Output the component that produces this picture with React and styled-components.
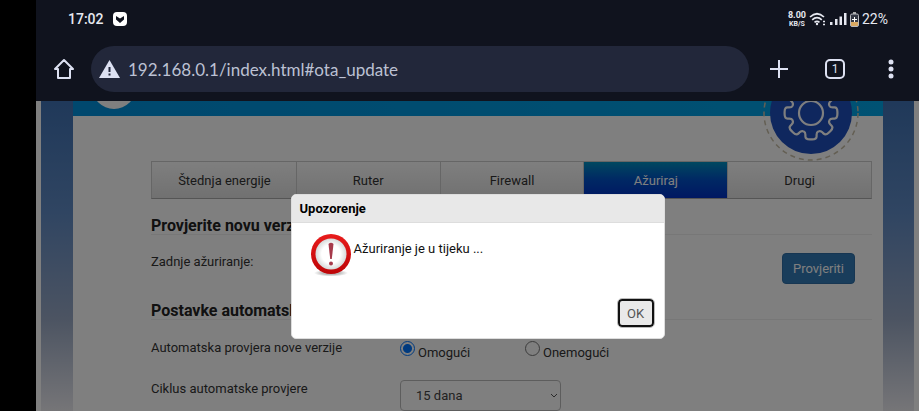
import React, { useState } from 'react';
import styled, { createGlobalStyle } from 'styled-components';

const GlobalStyle = createGlobalStyle`
  * {
    box-sizing: border-box;
  }

  body {
    margin: 0;
    background: #000;
    font-family: Roboto, 'Liberation Sans', sans-serif;
    font-size: 13px;
    color: #333;
  }

  button,
  input,
  select {
    font-family: inherit;
    font-size: inherit;
    margin: 0;
  }
`;

const Device = styled.div`
  display: flex;
  flex-direction: column;
  height: 100vh;
  margin-left: 36px;
  background: #10131e;
  overflow: hidden;
`;

const StatusBar = styled.div`
  display: flex;
  flex: none;
  align-items: center;
  justify-content: space-between;
  height: 38px;
  padding: 0 31px 0 32px;
  color: #e6e8f0;
`;

const StatusGroup = styled.div`
  display: flex;
  align-items: center;
  gap: ${(props) => props.$gap}px;

  svg {
    display: block;
  }
`;

const Clock = styled.span`
  font-size: 14px;
  font-weight: 500;
`;

const Speed = styled.span`
  display: flex;
  flex-direction: column;
  align-items: center;
  font-size: 9px;
  line-height: 10px;
  font-weight: 700;

  small {
    font-size: 7px;
    line-height: 8px;
  }
`;

const Battery = styled.span`
  font-size: 14px;
`;

const Toolbar = styled.div`
  display: flex;
  flex: none;
  align-items: center;
  height: 63px;
  padding: 0 16px 1px;
`;

const IconButton = styled.button`
  display: flex;
  align-items: center;
  justify-content: center;
  width: 24px;
  height: 24px;
  padding: 0;
  border: 0;
  background: none;
  color: #dde1f2;
`;

const AddressBar = styled.label`
  display: flex;
  flex: 1;
  align-items: center;
  gap: 8px;
  height: 46px;
  margin: 0 18px 0 15px;
  padding: 0 8px;
  border-radius: 23px;
  background: #22273a;
`;

const Address = styled.input`
  flex: 1;
  min-width: 0;
  height: 30px;
  padding: 0;
  border: 0;
  outline: 0;
  background: none;
  color: #bcc1d3;

  && {
    font-family: Lato, sans-serif;
    font-size: 17px;
  }
`;

const Actions = styled.div`
  display: flex;
  gap: 32px;
`;

const TabCount = styled.span`
  display: flex;
  align-items: center;
  justify-content: center;
  width: 20px;
  height: 20px;
  border: 2px solid;
  border-radius: 5px;
  font-size: 12px;
`;

const Viewport = styled.div`
  position: relative;
  flex: 1;
  min-height: 0;
  padding: 0 5px;
  background: #fff;
  overflow: hidden;
`;

const Backdrop = styled.div`
  height: 100%;
  padding: 0 31px 0 32px;
  background: linear-gradient(#4072b4, #5f8ac4 35%, #98a8c4 70%, #ecebf0);
`;

const Sheet = styled.main`
  position: relative;
  height: 100%;
  background: #fff;
`;

const Header = styled.header`
  position: relative;
  height: 15px;
  background: linear-gradient(90deg, #0090dc, #00a4e6);
  overflow: hidden;
`;

const Logo = styled.div`
  position: absolute;
  left: 19px;
  bottom: 7px;
  width: 44px;
  height: 44px;
  border-radius: 50%;
  background: #fff;
`;

const SettingsBadge = styled.svg`
  position: absolute;
  top: -36px;
  right: 24px;
`;

const Content = styled.div`
  padding: 45px 11px 0 78px;
`;

const Tabs = styled.nav`
  display: grid;
  grid-template-columns: repeat(5, 1fr);
  height: 38px;
  border: 1px solid #ccc;
  border-bottom-color: #aaa;
`;

const Tab = styled.button`
  border: 0;
  border-left: 1px solid ${(props) => (props.$first ? 'transparent' : '#ccc')};
  background: ${(props) =>
    props.$active
      ? 'linear-gradient(#0090c0, #0050c8 50%, #0030c4)'
      : 'linear-gradient(#fefefe, #e2e2e2)'};
  color: ${(props) => (props.$active ? '#fff' : '#333')};
`;

const SectionTitle = styled.h2`
  height: 36px;
  margin: 0;
  border-bottom: 1px solid #eee;
  font-size: 16px;
  line-height: 18px;
  padding-top: 18px;
  color: #222;
`;

const Row = styled.div`
  display: grid;
  grid-template-columns: 249px 1fr;
  height: ${(props) => props.$height}px;
  padding-top: ${(props) => props.$top}px;
  align-items: start;
  line-height: 18px;
`;

const CheckButton = styled.button`
  justify-self: end;
  width: 73px;
  height: 31px;
  margin-right: 17px;
  padding: 0;
  border: 1px solid #2e6da4;
  border-radius: 4px;
  background: #337ab7;
  color: #fff;
`;

const Radios = styled.div`
  display: flex;
`;

const RadioLabel = styled.label`
  display: flex;
  width: 125px;
  gap: 3px;
  padding-top: 5px;
`;

const Radio = styled.input`
  appearance: none;
  width: 15px;
  height: 15px;
  margin-top: -3px !important;
  border: 1px solid #777;
  border-radius: 50%;
  background: #fff;

  &:checked {
    border-color: #0075ff;
    background: radial-gradient(circle, #0075ff 4px, #fff 5px);
  }
`;

const SelectBox = styled.div`
  display: grid;
  align-items: center;
  width: 161px;

  > * {
    grid-area: 1 / 1;
  }

  svg {
    justify-self: end;
    margin-right: 3px;
    pointer-events: none;
  }
`;

const Select = styled.select`
  appearance: none;
  height: 31px;
  padding: 0 15px;
  border: 1px solid #bbb;
  border-radius: 4px;
  background: #fff;
  color: #444;
`;

const Overlay = styled.div`
  position: absolute;
  inset: 0;
  display: flex;
  align-items: flex-start;
  justify-content: center;
  padding: 93px 0 0;
  background: rgba(0, 0, 0, 0.5);
`;

const Dialog = styled.section`
  display: flex;
  flex-direction: column;
  width: 374px;
  height: 145px;
  border: 1px solid #ddd;
  border-radius: 5px;
  background: #fff;
  color: #111;
  overflow: hidden;
`;

const DialogTitle = styled.h3`
  margin: 0;
  padding: 0 8px;
  border-bottom: 1px solid #ddd;
  background: #e8e8e8;
  font-size: 13px;
  line-height: 27px;
  color: #000;
`;

const DialogBody = styled.div`
  display: flex;
  flex: 1;
  gap: 2px;
  padding: 10px 18px 0;

  p {
    margin: 8px 0 0;
    line-height: 16px;
  }
`;

const OkButton = styled.button`
  align-self: flex-end;
  width: 36px;
  height: 28px;
  margin: 0 10px 11px !important;
  padding: 0;
  border: 2px solid #111;
  border-radius: 4px;
  outline: 1px solid #bbb;
  background: #e9e9e9;
  color: #555;
`;

const WarningIcon = () => (
  <svg width="42" height="44" viewBox="0 0 42 44">
    <defs>
      <linearGradient id="ring" x1="0" y1="0" x2="0" y2="1">
        <stop offset="0" stopColor="#e81c1c" />
        <stop offset="1" stopColor="#bd0508" />
      </linearGradient>
      <radialGradient id="face">
        <stop offset="0.6" stopColor="#fff" />
        <stop offset="1" stopColor="#d6d9d9" />
      </radialGradient>
      <radialGradient id="shade">
        <stop offset="0.5" stopColor="#bbb" />
        <stop offset="1" stopColor="#fff" />
      </radialGradient>
    </defs>
    <ellipse cx="21" cy="40" rx="17" ry="3.5" fill="url(#shade)" />
    <circle cx="21" cy="21" r="20" fill="url(#ring)" />
    <circle cx="21" cy="21" r="15.5" fill="url(#face)" />
    <path d="M18.500 11q2.500-2.500 5 0L21.800 26h-1.600z" fill="#a63a4b" />
    <circle cx="21" cy="30.500" r="2" fill="#a63a4b" />
  </svg>
);

const tabs = ['Štednja energije', 'Ruter', 'Firewall', 'Ažuriraj', 'Drugi'];

// eight-toothed outline around the centre of the badge, with softened corners
const gearPath = () => {
  const points = [];
  for (let i = 0; i < 8; i++) {
    [[-16, 20], [-12, 27], [12, 27], [16, 20]].forEach(([offset, radius]) => {
      const angle = ((i * 45 + offset) * Math.PI) / 180;
      points.push([48 + radius * Math.sin(angle), 48 - radius * Math.cos(angle)]);
    });
  }
  const between = (a, b) =>
    `${(a[0] + (b[0] - a[0]) * 0.4).toFixed(1)} ${(a[1] + (b[1] - a[1]) * 0.4).toFixed(1)}`;
  const corners = points.map((point, i) => {
    const prev = points[(i + points.length - 1) % points.length];
    const next = points[(i + 1) % points.length];
    return `${between(point, prev)}Q${point[0].toFixed(1)} ${point[1].toFixed(1)} ${between(point, next)}`;
  });
  return `M${corners.join('L')}Z`;
};

const App = () => {
  const [mode, setMode] = useState('on');
  const [open, setOpen] = useState(true);

  return (
    <>
      <GlobalStyle />
      <Device>
        <StatusBar>
          <StatusGroup $gap={9}>
            <Clock>17:02</Clock>
            <svg width="14" height="14" viewBox="0 0 14 14">
              <rect width="14" height="14" rx="4" fill="#fff" />
              <path d="M3 4 7 6.500l4-2.500v3.500L7 11 3 7.500z" fill="#10131e" />
            </svg>
          </StatusGroup>
          <StatusGroup $gap={3}>
            <Speed>
              8.00<small>KB/S</small>
            </Speed>
            <svg width="18" height="14" viewBox="0 0 18 14" fill="none" stroke="currentColor" strokeWidth="1.7">
              <path d="M1 5q7-6.500 14 0M3.200 7.800q4.800-4.200 9.600 0M5.500 10.300q2.500-2 5 0" />
              <circle cx="8" cy="12" r="1.200" fill="currentColor" stroke="none" />
              <path d="M14 9.500h2M14 12.500h2" />
            </svg>
            <svg width="17" height="12" viewBox="0 0 17 12" fill="currentColor">
              <path d="M0 9h2.500v3H0zM5 6h2.500v6H5zM9.500 3.500H12V12H9.500zM14 0h2.500v12H14z" />
            </svg>
            <svg width="9" height="15" viewBox="0 0 9 15">
              <path d="M3 0h3v2H3z" fill="#aaa" />
              <rect x="0.500" y="2" width="8" height="12.500" rx="1.500" fill="#333743" stroke="#b9bac0" />
              <path d="M1 10h7v4H1z" fill="#d9a862" />
              <path d="M4 5h1v2h2v1H5v2H4V8H2V7h2z" fill="#fff" />
            </svg>
            <Battery>22%</Battery>
          </StatusGroup>
        </StatusBar>

        <Toolbar>
          <IconButton aria-label="Home">
            <svg width="22" height="22" viewBox="0 0 22 22" fill="none" stroke="currentColor" strokeWidth="2" strokeLinejoin="round" strokeLinecap="round">
              <path d="M2 11 11 2l9 9h-3v9H5v-9z" />
            </svg>
          </IconButton>
          <AddressBar>
            <svg width="21" height="18" viewBox="0 0 21 18" aria-hidden="true">
              <path d="M10.500 0 21 18H0z" fill="#dde1f2" />
              <path d="M9.500 7h2v5h-2zM9.500 13.500h2v2h-2z" fill="#22273a" />
            </svg>
            <Address aria-label="Address" defaultValue="192.168.0.1/index.html#ota_update" />
          </AddressBar>
          <Actions>
            <IconButton aria-label="New tab">
              <svg width="18" height="18" viewBox="0 0 18 18" stroke="currentColor" strokeWidth="2">
                <path d="M0 9h18M9 0v18" />
              </svg>
            </IconButton>
            <IconButton aria-label="Tabs">
              <TabCount>1</TabCount>
            </IconButton>
            <IconButton aria-label="Menu">
              <svg width="6" height="20" viewBox="0 0 6 20" fill="currentColor">
                <circle cx="3" cy="3" r="2.500" />
                <circle cx="3" cy="10" r="2.500" />
                <circle cx="3" cy="17" r="2.500" />
              </svg>
            </IconButton>
          </Actions>
        </Toolbar>

        <Viewport>
          <Backdrop>
            <Sheet>
              <Header>
                <Logo />
              </Header>
              <SettingsBadge width="96" height="96" viewBox="0 0 96 96" fill="none">
                <circle cx="48" cy="48" r="47" stroke="#c8bfa8" strokeWidth="1.500" strokeDasharray="5 4" />
                <circle cx="48" cy="48" r="41" fill="#1f4fbc" />
                <path d={gearPath()} stroke="#fff" strokeWidth="2.200" strokeLinejoin="round" />
                <circle cx="48" cy="48" r="12" stroke="#fff" strokeWidth="2.200" />
              </SettingsBadge>
              <Content>
                <Tabs>
                  {tabs.map((name, i) => (
                    <Tab key={name} $first={i === 0} $active={name === 'Ažuriraj'}>
                      {name}
                    </Tab>
                  ))}
                </Tabs>

                <SectionTitle>Provjerite novu verziju</SectionTitle>
                <Row $height={49} $top={18}>
                  <span>Zadnje ažuriranje:</span>
                  <CheckButton>Provjeriti</CheckButton>
                </Row>

                <SectionTitle>Postavke automatskog ažuriranja</SectionTitle>
                <Row $height={46} $top={19}>
                  <span>Automatska provjera nove verzije</span>
                  <Radios>
                    <RadioLabel>
                      <Radio type="radio" name="mode" checked={mode === 'on'} onChange={() => setMode('on')} />
                      Omogući
                    </RadioLabel>
                    <RadioLabel>
                      <Radio type="radio" name="mode" checked={mode === 'off'} onChange={() => setMode('off')} />
                      Onemogući
                    </RadioLabel>
                  </Radios>
                </Row>
                <Row $height={46} $top={14}>
                  <label htmlFor="cycle">Ciklus automatske provjere</label>
                  <SelectBox>
                    <Select id="cycle" defaultValue="15">
                      <option value="15">15 dana</option>
                    </Select>
                    <svg width="8" height="5" viewBox="0 0 8 5" fill="none" stroke="#555">
                      <path d="M1 1l3 3 3-3" />
                    </svg>
                  </SelectBox>
                </Row>
              </Content>
            </Sheet>
          </Backdrop>

          {open && (
            <Overlay>
              <Dialog role="alertdialog" aria-labelledby="dialog-title">
                <DialogTitle id="dialog-title">Upozorenje</DialogTitle>
                <DialogBody>
                  <WarningIcon />
                  <p>Ažuriranje je u tijeku ...</p>
                </DialogBody>
                <OkButton onClick={() => setOpen(false)}>OK</OkButton>
              </Dialog>
            </Overlay>
          )}
        </Viewport>
      </Device>
    </>
  );
};

export default App;
